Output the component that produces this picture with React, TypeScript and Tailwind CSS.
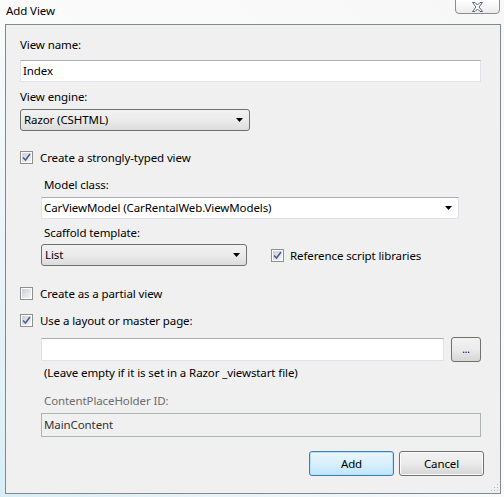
import React from 'react';

const font = { fontFamily: '"Noto Sans", "Open Sans", sans-serif' };

function CheckBox({ checked }: { checked?: boolean }) {
  return (
    <div className="w-[13px] h-[13px] shrink-0 border border-[#8e8f8f] bg-white p-[1px]">
      <div className="w-full h-full bg-gradient-to-br from-[#cbcfd5] to-[#f6f6f6] flex items-center justify-center">
        {checked && (
          <svg width="9" height="9" viewBox="0 0 9 9">
            <path d="M1 4.5 L3.5 7 L8 1" fill="none" stroke="#4a5f97" strokeWidth="1.6" />
          </svg>
        )}
      </div>
    </div>
  );
}

function Arrow() {
  return (
    <svg width="7" height="4" viewBox="0 0 7 4" className="shrink-0">
      <path d="M0 0 H7 L3.5 4 Z" fill="#000" />
    </svg>
  );
}

function DropList({ value, width }: { value: string; width: string }) {
  return (
    <div
      className={`${width} h-[22px] rounded-[3px] border border-[#707070] bg-gradient-to-b from-[#f2f2f2] via-[#ebebeb] to-[#dcdcdc] flex items-center pl-[3px] pr-[6px] text-black`}
    >
      <span className="flex-1">{value}</span>
      <Arrow />
    </div>
  );
}

function TextBox({ value, className = '' }: { value?: string; className?: string }) {
  return (
    <div
      className={`h-[22px] bg-white border border-[#dfe3e8] border-t-[#abadb3] flex items-center pl-[2px] text-black ${className}`}
    >
      {value}
    </div>
  );
}

export default function App() {
  return (
    <div
      style={font}
      className="w-[504px] h-[497px] flex flex-col bg-gradient-to-tr from-[#d8eef5] via-[#fbfbfb] to-[#f7f7f7] overflow-hidden"
    >
      {/* title bar */}
      <div className="h-[24px] flex items-start shrink-0">
        <div className="pl-[6px] pt-[2px] text-[11.5px] tracking-[-0.1px] text-black">Add View</div>
        <div className="ml-auto mr-[4px] mt-[-1px] w-[45px] h-[15px] rounded-b-[4px] border border-[#8d8d8d] bg-gradient-to-b from-white to-[#ececec] flex items-center justify-center">
          <svg width="11" height="10" viewBox="0 0 11 10">
            <path
              d="M0.5 0.5 H3 L5.5 3 L8 0.5 H10.5 L7 5 L10.5 9.5 H8 L5.5 7 L3 9.5 H0.5 L4 5 Z"
              fill="#fff"
              stroke="#5b6373"
              strokeWidth="1"
            />
          </svg>
        </div>
      </div>

      {/* client area */}
      <div className="ml-[5px] mr-[3px] h-[470px] border border-[#828790] bg-[#f0f0f0] pl-[14px] pr-[19px] text-[11.5px] tracking-[-0.1px] text-black flex flex-col relative">
        <div className="mt-[12px] h-[15px] leading-[15px]">View name:</div>
        <TextBox value="Index" className="mt-[8px] w-full" />

        <div className="mt-[7px] h-[15px] leading-[15px]">View engine:</div>
        <div className="mt-[5px]">
          <DropList value="Razor (CSHTML)" width="w-[230px]" />
        </div>

        <div className="mt-[19px] h-[15px] flex items-center gap-[7px]">
          <CheckBox checked />
          <span className="leading-[15px]">Create a strongly-typed view</span>
        </div>

        <div className="pl-[21px] flex flex-col">
          <div className="mt-[12px] h-[15px] leading-[15px] pl-[3px]">Model class:</div>
          <div className="mt-[5px] w-[418px] h-[22px] bg-white border border-[#dfe3e8] border-t-[#abadb3] flex items-center pl-[2px] pr-[6px]">
            <span className="flex-1">CarViewModel (CarRentalWeb.ViewModels)</span>
            <Arrow />
          </div>

          <div className="mt-[6px] h-[15px] leading-[15px] pl-[3px]">Scaffold template:</div>
          <div className="mt-[4px] flex items-center">
            <DropList value="List" width="w-[206px]" />
            <div className="ml-[24px] flex items-center gap-[6px]">
              <CheckBox checked />
              <span className="leading-[15px]">Reference script libraries</span>
            </div>
          </div>
        </div>

        <div className="mt-[20px] h-[15px] flex items-center gap-[7px]">
          <CheckBox />
          <span className="leading-[15px]">Create as a partial view</span>
        </div>

        <div className="mt-[12px] h-[15px] flex items-center gap-[7px]">
          <CheckBox checked />
          <span className="leading-[15px]">Use a layout or master page:</span>
        </div>

        <div className="pl-[21px] flex flex-col">
          <div className="mt-[9px] flex items-center">
            <TextBox className="w-[403px] h-[23px]" />
            <div className="ml-[7px] w-[30px] h-[25px] rounded-[3px] border border-[#707070] bg-gradient-to-b from-[#f2f2f2] via-[#ebebeb] to-[#d6d6d6] flex items-center justify-center text-[10px] leading-none pb-[2px]">
              ...
            </div>
          </div>
          <div className="mt-[3px] h-[15px] leading-[15px] pl-[3px]">
            (Leave empty if it is set in a Razor _viewstart file)
          </div>

          <div className="mt-[13px] h-[15px] leading-[15px] pl-[3px] text-[#6d6d6d]">ContentPlaceHolder ID:</div>
          <div className="mt-[5px] w-full h-[24px] bg-[#f0f0f0] border border-[#adb2b5] flex items-center pl-[2px] text-[#333]">
            MainContent
          </div>
        </div>

        <div className="mt-[14px] flex justify-end gap-[5px] mr-[-3px]">
          <div className="w-[85px] h-[25px] rounded-[3px] border border-[#3c7fb1] bg-gradient-to-b from-[#eaf6fd] via-[#d9f0fc] to-[#bee6fd] shadow-[inset_0_0_0_1px_#b5e0f8] flex items-center justify-center">
            Add
          </div>
          <div className="w-[85px] h-[25px] rounded-[3px] border border-[#707070] bg-gradient-to-b from-[#f2f2f2] via-[#ebebeb] to-[#d4d4d4] shadow-[inset_0_0_0_1px_#fcfcfc] flex items-center justify-center">
            Cancel
          </div>
        </div>

        {/* resize grip */}
        <svg width="8" height="8" viewBox="0 0 8 8" className="absolute right-[1px] bottom-[1px]">
          <rect x="6" y="0" width="1" height="1" fill="#b8b8b8" />
          <rect x="3" y="3" width="1" height="1" fill="#b8b8b8" />
          <rect x="6" y="3" width="1" height="1" fill="#b8b8b8" />
          <rect x="0" y="6" width="1" height="1" fill="#b8b8b8" />
          <rect x="3" y="6" width="1" height="1" fill="#b8b8b8" />
          <rect x="6" y="6" width="1" height="1" fill="#b8b8b8" />
        </svg>
      </div>
    </div>
  );
}
